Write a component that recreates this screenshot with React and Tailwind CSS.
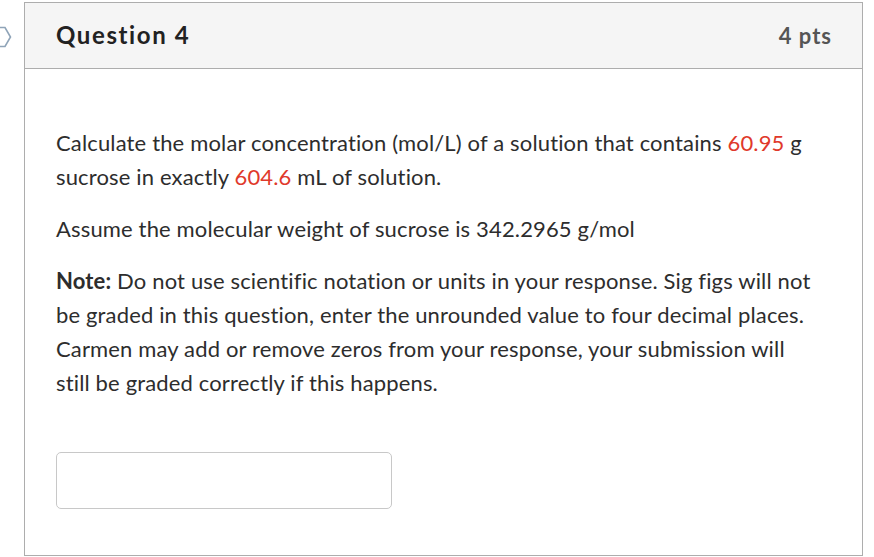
import React from "react";

export default function App() {
  return (
    <div className="relative w-[874px] h-[557px] bg-white overflow-hidden" style={{ fontFamily: "Lato, 'Noto Sans', sans-serif", fontVariantLigatures: "none" }}>
      {/* bookmark arrow, mostly cut off at the left edge */}
      <svg className="absolute left-0 top-[26px]" width="14" height="22" viewBox="0 0 14 22">
        <path d="M-6 1.5 H5 L10.5 11 L5 20.5 H-6" fill="none" stroke="#8fa4b8" strokeWidth="1.6" />
      </svg>

      <div className="ml-[24px] mt-[2px] w-[839px] h-[554px] border border-[#adadad] flex flex-col">
        <div className="h-[66px] bg-[#f5f5f5] border-b border-[#adadad] flex items-center justify-between pl-[31px] pr-[30px]">
          <h2 className="text-[24px] font-bold tracking-[1.6px] text-[#222] -mt-[1px]">Question 4</h2>
          <span className="text-[22px] font-bold tracking-[1px] text-[#555] -mt-[1px]">4 pts</span>
        </div>

        <div className="pl-[31px] pr-[41px] pt-[57px] text-[22px] leading-[34px] tracking-[0.15px] text-[#2d2d2d]">
          <p>
            Calculate the molar concentration (mol/L) of a solution that contains{" "}
            <span className="text-[#e0392b]">60.95</span> g sucrose in exactly{" "}
            <span className="text-[#e0392b]">604.6</span> mL of solution.
          </p>
          <p className="mt-[18px]">Assume the molecular weight of sucrose is 342.2965 g/mol</p>
          <p className="mt-[18px]">
            <strong className="font-bold">Note:</strong> Do not use scientific notation or units in your response. Sig figs will not be graded in this question, enter the unrounded value to four decimal places. Carmen may add or remove zeros from your response, your submission will still be graded correctly if this happens.
          </p>
          <input
            type="text"
            className="mt-[52px] block w-[336px] h-[57px] border border-[#c8c8c8] rounded-[5px] bg-white outline-none"
          />
        </div>
      </div>
    </div>
  );
}
